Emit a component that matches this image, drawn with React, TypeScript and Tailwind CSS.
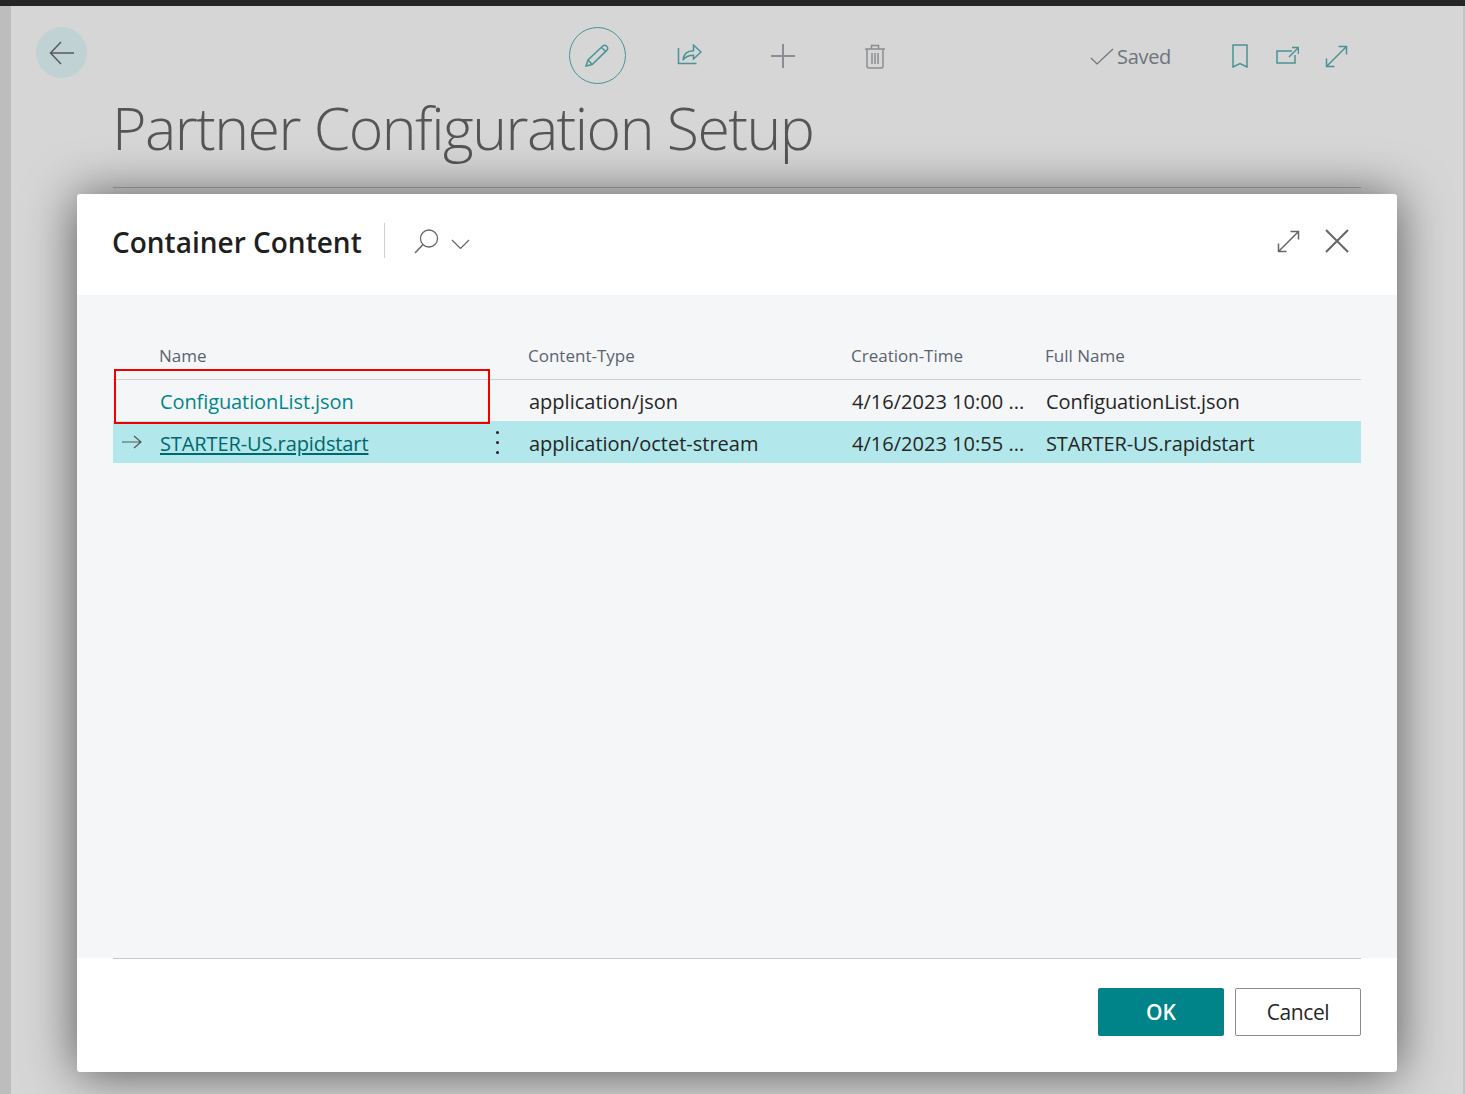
import React from "react";

const Icon = ({ w, h, className, children }: { w: number; h: number; className?: string; children: React.ReactNode }) => (
  <svg width={w} height={h} viewBox={`0 0 ${w} ${h}`} fill="none" stroke="currentColor" className={className}>
    {children}
  </svg>
);

const rows = [
  {
    name: "ConfiguationList.json",
    type: "application/json",
    time: "4/16/2023 10:00 ...",
    full: "ConfiguationList.json",
    selected: false,
  },
  {
    name: "STARTER-US.rapidstart",
    type: "application/octet-stream",
    time: "4/16/2023 10:55 ...",
    full: "STARTER-US.rapidstart",
    selected: true,
  },
];

function PageBehind() {
  return (
    <div className="flex h-[1088px]">
      <div className="w-[11px] bg-[#bdbdbd]" />
      <div className="flex-1 bg-[#d6d6d6] border-r-2 border-[#c4c4c4] pl-[25px]">
        {/* toolbar */}
        <div className="flex items-start pt-[21px] h-[82px]">
          <button className="w-[51px] h-[51px] rounded-full bg-[#c0d2d4] flex items-center justify-center text-[#5a5a5a]">
            <Icon w={25} h={24}>
              <path d="M12 1 1.500 12 12 23M2 12h23" strokeWidth="1.500" />
            </Icon>
          </button>
          <div className="ml-[482px] w-[57px] h-[57px] rounded-full border border-[#4a9497] flex items-center justify-center text-[#4a9497]">
            <Icon w={25} h={23}>
              <path d="M1 22l2-6L17.500 2.200c1.300-1.200 3-1.200 4.200 0s1.100 3 0 4.200L7.200 20.500 1 22ZM3 16l4.200 4.500M16.500 3.500l4.500 4.200" strokeWidth="1.500" />
            </Icon>
          </div>
          <div className="ml-[51px] mt-[17px] text-[#4a9497]">
            <Icon w={25} h={24}>
              <path d="M1.500 4v15.500h18M16.500 1l7.500 7-7.500 7v-3.800c-5 0-8 1.200-10.500 5 .5-6 4-9.500 10.500-9.500V1Z" strokeWidth="1.500" />
            </Icon>
          </div>
          <div className="ml-[69px] mt-[17px] text-[#8a8d93]">
            <Icon w={24} h={24}>
              <path d="M12 0v24M0 12h24" strokeWidth="2" />
            </Icon>
          </div>
          <div className="ml-[70px] mt-[17px] text-[#8a8d93]">
            <Icon w={20} h={25}>
              <path d="M0 5h20M2 5v17c0 1.500 1 2 2 2h12c1 0 2-.5 2-2V5M6.500 5V1.500h7V5M7 9v11M10 9v11M13 9v11" strokeWidth="1.500" />
            </Icon>
          </div>
          <div className="ml-[205px] mt-[18px] flex items-center text-[#6f747c]">
            <Icon w={24} h={18}>
              <path d="M1 10l6 6L23 1" strokeWidth="1.200" />
            </Icon>
            <span className="ml-[3px] text-[20px] leading-[24px] font-[Open_Sans,sans-serif] tracking-[-0.3px]">Saved</span>
          </div>
          <div className="ml-[61px] mt-[17px] text-[#4a9497]">
            <Icon w={16} h={24}>
              <path d="M1 1h14v22l-7-3.500L1 23V1Z" strokeWidth="1.500" />
            </Icon>
          </div>
          <div className="ml-[28px] mt-[19px] text-[#4a9497]">
            <Icon w={23} h={18}>
              <path d="M16 5H1v12h18V9M13 11l9-9M16 1.500h6.500V8" strokeWidth="1.500" />
            </Icon>
          </div>
          <div className="ml-[26px] mt-[18px] text-[#4a9497]">
            <Icon w={23} h={23}>
              <path d="M1.500 21.500l20-20M13.500 1.500h8v8M1.500 13.500v8h8" strokeWidth="1.500" />
            </Icon>
          </div>
        </div>
        <h1 className="ml-[76px] -mt-px text-[59px] leading-[80px] font-light text-[#555] font-[Open_Sans,sans-serif] tracking-[-1.54px]">
          Partner Configuration Setup
        </h1>
        <div className="ml-[77px] mr-[102px] mt-5 h-px bg-[#a8a8a8]" />
      </div>
    </div>
  );
}

function ContainerDialog() {
  return (
    <div className="absolute left-[77px] top-[194px] w-[1320px] h-[878px] bg-white rounded-[3px] shadow-[0_2px_50px_rgba(0,0,0,0.6)] flex flex-col">
      <div className="h-[101px] flex items-start px-9 text-[#1f1f1f]">
        <h2 className="mt-[28px] -ml-px text-[28px] leading-[40px] font-semibold font-[Open_Sans,sans-serif]">
          Container Content
        </h2>
        <div className="ml-[22px] mt-[29px] w-px h-[35px] bg-[#d0d0d0]" />
        <div className="ml-[29px] mt-[35px] text-[#666]">
          <Icon w={26} h={25}>
            <circle cx="15" cy="9.500" r="8.500" strokeWidth="1.300" />
            <path d="M9 15.500 1 24" strokeWidth="1.500" />
          </Icon>
        </div>
        <div className="ml-[11px] mt-[45px] text-[#666]">
          <Icon w={19} h={10}>
            <path d="M1 1l8.500 8.500L18 1" strokeWidth="1.200" />
          </Icon>
        </div>
        <div className="ml-auto mt-[36px] text-[#666]">
          <Icon w={23} h={23}>
            <path d="M1.500 21.500l20-20M13.500 1.500h8v8M1.500 13.500v8h8" strokeWidth="1.500" />
          </Icon>
        </div>
        <div className="ml-[25px] mr-[12px] mt-[35px] text-[#666]">
          <Icon w={24} h={24}>
            <path d="M1 1l22 22M23 1 1 23" strokeWidth="2" />
          </Icon>
        </div>
      </div>

      <div className="h-[663px] bg-[#f5f6f8] px-9 pt-[47px] font-[Open_Sans,sans-serif]">
        <div className="grid grid-cols-[46px_369px_323px_194px_1fr] h-[38px] border-b border-[#cfd0d2] text-[17px] leading-[28px] text-[#5c6370]">
          <div />
          <div>Name</div>
          <div>Content-Type</div>
          <div>Creation-Time</div>
          <div>Full Name</div>
        </div>
        {rows.map((row) => (
          <div
            key={row.name}
            className={
              row.selected
                ? "grid grid-cols-[46px_369px_323px_194px_1fr] h-[42px] pt-[3px] items-center bg-[#b2e8eb] text-[20px] text-[#262626] tracking-[-0.1px]"
                : "grid grid-cols-[46px_369px_323px_194px_1fr] h-[41px] pt-[2px] items-center text-[20px] text-[#262626] tracking-[-0.1px]"
            }
          >
            <div className="pl-[9px] -mt-[3px] text-[#555]">
              {row.selected && (
                <Icon w={20} h={14} className="block">
                  <path d="M0 7h19M12 1l7 6-7 6" strokeWidth="1.200" />
                </Icon>
              )}
            </div>
            <div className="pl-px flex items-center justify-between">
              <span className={row.selected ? "text-[#00676b] underline underline-offset-2" : "text-[#00868b]"}>{row.name}</span>
              {row.selected && (
                <span className="mr-[29px] -mt-[3px] flex flex-col gap-[7px]">
                  <span className="w-[3px] h-[3px] rounded-full bg-[#222]" />
                  <span className="w-[3px] h-[3px] rounded-full bg-[#222]" />
                  <span className="w-[3px] h-[3px] rounded-full bg-[#222]" />
                </span>
              )}
            </div>
            <div className="pl-px tracking-[0px]">{row.type}</div>
            <div className="pl-px whitespace-nowrap tracking-[0.02px]">{row.time}</div>
            <div className="pl-px">{row.full}</div>
          </div>
        ))}
      </div>

      <div className="flex-1 px-9">
        <div className="h-px bg-[#c8c8c8]" />
        <div className="flex justify-end gap-[11px] mt-[29px] font-[Open_Sans,sans-serif] text-[21px]">
          <button className="w-[126px] h-[48px] pt-[2px] rounded-[2px] bg-[#008489] text-white font-semibold">OK</button>
          <button className="w-[126px] h-[48px] pt-[2px] rounded-[2px] bg-white border border-[#8a8a8a] text-[#262626] tracking-[-0.4px]">Cancel</button>
        </div>
      </div>

      {/* red marker from the screenshot annotation */}
      <div className="absolute left-[37px] top-[175px] w-[376px] h-[55px] border-2 border-[#f00000]" />
    </div>
  );
}

export default function App() {
  return (
    <div className="relative w-[1465px] h-[1094px] overflow-hidden bg-[#d6d6d6]">
      <div className="h-1.5 bg-[#262626]" />
      <PageBehind />
      <ContainerDialog />
    </div>
  );
}
